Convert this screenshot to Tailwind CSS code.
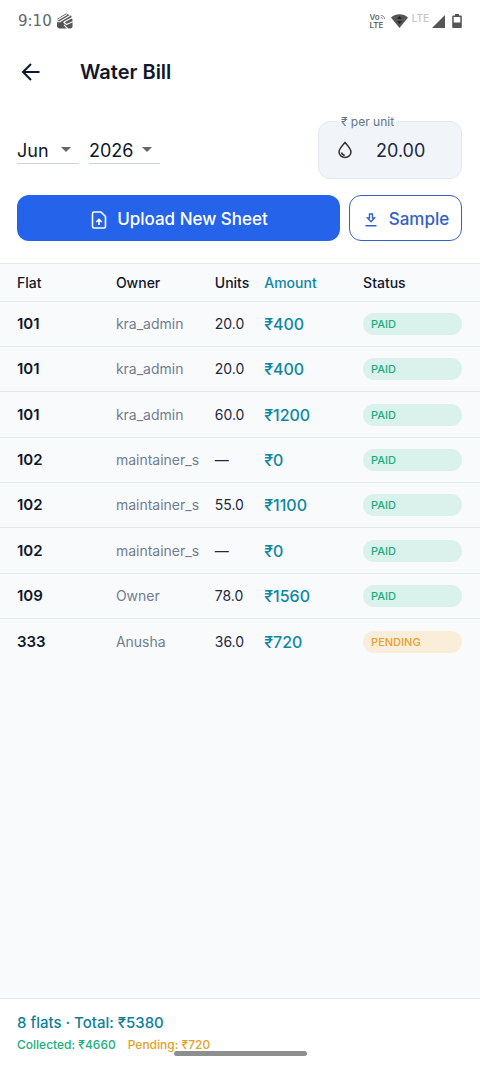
<!DOCTYPE html>
<html lang="en">
<head>
<meta charset="utf-8">
<meta name="viewport" content="width=device-width, initial-scale=1">
<title>Water Bill</title>
<script src="https://cdn.jsdelivr.net/npm/@tailwindcss/browser@4"></script>
</head>
<body class="flex min-h-screen flex-col bg-white font-['Inter','Noto_Sans',sans-serif] text-slate-900">

<!-- System status bar -->
<div class="flex h-[42px] items-center justify-between px-[18px] text-[#666]">
  <div class="flex items-center gap-1">
    <span class="font-['DejaVu_Sans',sans-serif] text-[15px]">9:10</span>
    <svg class="h-4 w-[17px]" viewBox="0 0 17 16"><path fill="#555" d="M1 6 10 .5 15.500 3v2.500l1 1V14L15 15.500H3L1 14z"/><path stroke="#fff" stroke-width="1.100" fill="none" d="M0 8 11 1.500M4 8.500 14 2.500M8 9 17 4M0 8.700h4.500M7.500 9l3 2.500 6.500-3M8 12l4 4"/></svg>
  </div>
  <div class="flex items-center">
    <span class="flex flex-col text-[8px] font-semibold leading-[8px]"><span class="flex items-center">Vo<svg class="size-[5px]" viewBox="0 0 6 6" fill="none" stroke="#666"><path d="M1 .5c2.500 0 4.500 2 4.500 4.500M1 3c1 0 2 1 2 2"/></svg></span><span>LTE</span></span>
    <svg class="ml-[6px] h-[14px] w-[17px]" viewBox="0 0 17 14"><path fill="#555" d="M0 3.500C5-.8 12-.8 17 3.500L8.500 14z"/><path fill="#222" d="m8.500 2 2.500 3H6zM6 7h5l-2.500 3z"/></svg>
    <span class="ml-1 self-start text-[10px] leading-[10px] font-medium text-[#c4c4c4]">LTE</span>
    <svg class="ml-[3px] size-[13px]" viewBox="0 0 13 13"><path fill="#555" d="M13 0v13H0z"/></svg>
    <svg class="ml-[7px] h-[14px] w-[10px]" viewBox="0 0 10 14"><path fill="#555" fill-rule="evenodd" d="M3 0h4v1.500h2q.8 0 .8.8V13q0 1-.8 1H1q-.8 0-.8-1V2.300q0-.8.8-.8h2zM1.700 3v5.500h6.600V3z"/></svg>
  </div>
</div>

<header class="flex h-[60px] items-center gap-[37px] px-[19px]">
  <button type="button" aria-label="Back"><svg class="size-6" viewBox="0 0 24 24" fill="none" stroke="#0f172a" stroke-width="2"><path d="M20.500 12H4.500M12 4l-8 8 8 8"/></svg></button>
  <h1 class="text-xl font-semibold">Water Bill</h1>
</header>

<main class="flex grow flex-col">
  <form class="flex flex-col gap-4 px-[17px] pb-[22px] pr-[18px] pt-[19px]">
    <div class="flex items-center justify-between">
      <div class="flex gap-[10px] text-lg">
        <div class="flex h-[27px] items-center border-b border-slate-300">
          <select aria-label="Month" class="w-[62px] appearance-none bg-transparent pt-[2px]"><option>Jun</option></select>
          <svg class="pointer-events-none -ml-[18px] mr-2 h-[5px] w-[10px]" viewBox="0 0 10 5"><path fill="#666" d="M0 0h10L5 5z"/></svg>
        </div>
        <div class="flex h-[27px] items-center border-b border-slate-300">
          <select aria-label="Year" class="w-[71px] appearance-none bg-transparent pt-[2px]"><option>2026</option></select>
          <svg class="pointer-events-none -ml-[18px] mr-2 h-[5px] w-[10px]" viewBox="0 0 10 5"><path fill="#666" d="M0 0h10L5 5z"/></svg>
        </div>
      </div>
      <div class="relative flex h-[58px] w-36 items-center gap-[22px] rounded-xl border border-slate-200 bg-slate-100 pl-[17px]">
        <label for="rate" class="absolute -top-[9px] left-[18px] bg-linear-to-b from-white from-50% to-slate-100 to-50% px-1 text-xs leading-[18px] text-slate-500">₹ per unit</label>
        <svg class="h-[18px] w-[18px]" viewBox="0 0 18 18" fill="none" stroke="#333" stroke-width="1.500"><path d="M9 1.500C6 5 3 8 3 11a6 5.500 0 0 0 12 0C15 8 12 5 9 1.500z"/><path d="M5.500 11.500c.3 1.500 1.500 2.500 3.300 2.700"/></svg>
        <input id="rate" value="20.00" class="w-[70px] bg-transparent pt-[2px] text-lg text-slate-800">
      </div>
    </div>
    <div class="flex gap-[9px]">
      <button type="button" class="flex h-[46px] grow items-center justify-center gap-[10px] rounded-xl bg-[#2563eb] pl-[2px] pt-[3px] text-[17px] font-medium text-white">
        <svg class="h-[18px] w-[16px]" viewBox="0 0 16 18" fill="none" stroke="#fff" stroke-width="1.600"><path d="M10 1H3q-1.500 0-1.500 1.500v13Q1.500 17 3 17h10q1.500 0 1.500-1.500V5.500zM8 14V8.500M5.300 11 8 8.300l2.700 2.700"/></svg>
        Upload New Sheet
      </button>
      <button type="button" class="flex h-[46px] w-[113px] items-center justify-center gap-3 rounded-xl border border-[#3561c4] pl-[3px] pt-[3px] text-[17px] font-medium text-[#3561c4]">
        <svg class="h-[14px] w-[12px]" viewBox="0 0 12 14" fill="none" stroke="#3561c4" stroke-width="1.400"><path d="M4.500 1h3v4h2L6 8.700 2.500 5h2zM.5 12.800h11"/></svg>
        Sample
      </button>
    </div>
  </form>

  <div class="grow border-y border-slate-200 bg-slate-50">
    <table class="block w-full text-sm">
      <thead class="block">
        <tr class="grid h-[38px] grid-cols-[2fr_2fr_1fr_2fr_2fr] items-center border-b border-slate-200 pl-[17px] pr-[18px] text-left *:min-w-0 *:font-medium">
          <th>Flat</th><th>Owner</th><th>Units</th><th class="text-[#0f87a0]">Amount</th><th>Status</th>
        </tr>
      </thead>
      <tbody id="rows" class="block"></tbody>
    </table>
  </div>
</main>

<footer class="relative flex h-[68px] flex-col gap-1 px-[17px] pt-[14px]">
  <p class="text-[15px] leading-5 font-medium text-[#0e7f98]">8 flats · Total: ₹5380</p>
  <p class="flex gap-3 text-xs leading-4 font-medium"><span class="text-[#20ad7c]">Collected: ₹4660</span><span class="text-[#e5a02a]">Pending: ₹720</span></p>
  <div class="absolute inset-x-0 bottom-[11px] mx-auto h-[5px] w-[133px] rounded-full bg-[#8e8e8e]"></div>
</footer>

<template id="row">
  <tr class="grid h-[45px] grid-cols-[2fr_2fr_1fr_2fr_2fr] items-center border-b border-slate-200 pl-[17px] pr-[18px] *:min-w-0 last:border-b-0 nth-[3n]:h-[46px]">
    <td class="text-[15px] font-semibold"></td>
    <td class="text-sm text-[#737e8e]"></td>
    <td class="text-sm text-slate-800"></td>
    <td class="text-base font-medium text-[#0f87a0]"></td>
    <td class="rounded-full px-2 text-[11px] leading-[22px] font-medium"></td>
  </tr>
</template>
<script>
const bills = [
  ['101', 'kra_admin', '20.0', '₹400', 'PAID'],
  ['101', 'kra_admin', '20.0', '₹400', 'PAID'],
  ['101', 'kra_admin', '60.0', '₹1200', 'PAID'],
  ['102', 'maintainer_s', '—', '₹0', 'PAID'],
  ['102', 'maintainer_s', '55.0', '₹1100', 'PAID'],
  ['102', 'maintainer_s', '—', '₹0', 'PAID'],
  ['109', 'Owner', '78.0', '₹1560', 'PAID'],
  ['333', 'Anusha', '36.0', '₹720', 'PENDING'],
];
const tones = { PAID: ['bg-[#daf2eb]', 'text-[#20ad7c]'], PENDING: ['bg-[#faeedb]', 'text-[#e5a02a]'] };
for (const bill of bills) {
  const row = document.getElementById('row').content.cloneNode(true);
  const cells = row.querySelectorAll('td');
  bill.forEach((text, i) => { cells[i].textContent = text; });
  cells[4].classList.add(...tones[bill[4]]);
  document.getElementById('rows').append(row);
}
</script>
</body>
</html>
